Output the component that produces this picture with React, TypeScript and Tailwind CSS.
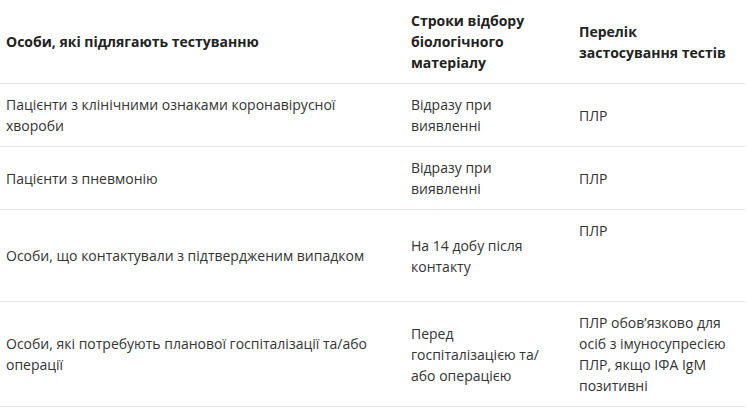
import React from "react";

const L = ({ lines }: { lines: string[] }) => (
  <>
    {lines.map((l, i) => (
      <div key={i} className="whitespace-nowrap">
        {l}
      </div>
    ))}
  </>
);

export default function App() {
  const td = "pl-[6px] pr-[4px] py-[10px] align-middle";
  const tr = "border-b border-[#e4e4e4]";
  return (
    <div
      className="w-[748px] h-[409px] bg-white text-[#333] text-[14px] leading-[21px]"
      style={{ fontFamily: '"Open Sans", "Noto Sans", sans-serif' }}
    >
      <table className="table-fixed border-collapse w-[745px]">
        <colgroup>
          <col className="w-[405px]" />
          <col className="w-[168px]" />
          <col className="w-[172px]" />
        </colgroup>
        <thead>
          <tr className={tr}>
            <th className={`${td} text-left font-bold text-[#222]`}>
              <L lines={["Особи, які підлягають тестуванню"]} />
            </th>
            <th className={`${td} text-left font-bold text-[#222]`}>
              <L lines={["Строки відбору", "біологічного", "матеріалу"]} />
            </th>
            <th className={`${td} text-left font-bold text-[#222]`}>
              <L lines={["Перелік", "застосування тестів"]} />
            </th>
          </tr>
        </thead>
        <tbody>
          <tr className={tr}>
            <td className={td}>
              <L lines={["Пацієнти з клінічними ознаками коронавірусної", "хвороби"]} />
            </td>
            <td className={td}>
              <L lines={["Відразу при", "виявленні"]} />
            </td>
            <td className={td}>
              <L lines={["ПЛР"]} />
            </td>
          </tr>
          <tr className={tr}>
            <td className={td}>
              <L lines={["Пацієнти з пневмонію"]} />
            </td>
            <td className={td}>
              <L lines={["Відразу при", "виявленні"]} />
            </td>
            <td className={td}>
              <L lines={["ПЛР"]} />
            </td>
          </tr>
          <tr className={tr}>
            <td className={td}>
              <L lines={["Особи, що контактували з підтвердженим випадком"]} />
            </td>
            <td className={td}>
              <L lines={["На 14 добу після", "контакту"]} />
            </td>
            <td className={td}>
              <div className="h-[71px]">ПЛР</div>
            </td>
          </tr>
          <tr className={tr}>
            <td className={td}>
              <L lines={["Особи, які потребують планової госпіталізації та/або", "операції"]} />
            </td>
            <td className={td}>
              <L lines={["Перед", "госпіталізацією та/", "або операцією"]} />
            </td>
            <td className={td}>
              <L
                lines={[
                  "ПЛР обов’язково для",
                  "осіб з імуносупресією",
                  "ПЛР, якщо ІФА IgM",
                  "позитивні",
                ]}
              />
            </td>
          </tr>
        </tbody>
      </table>
    </div>
  );
}
